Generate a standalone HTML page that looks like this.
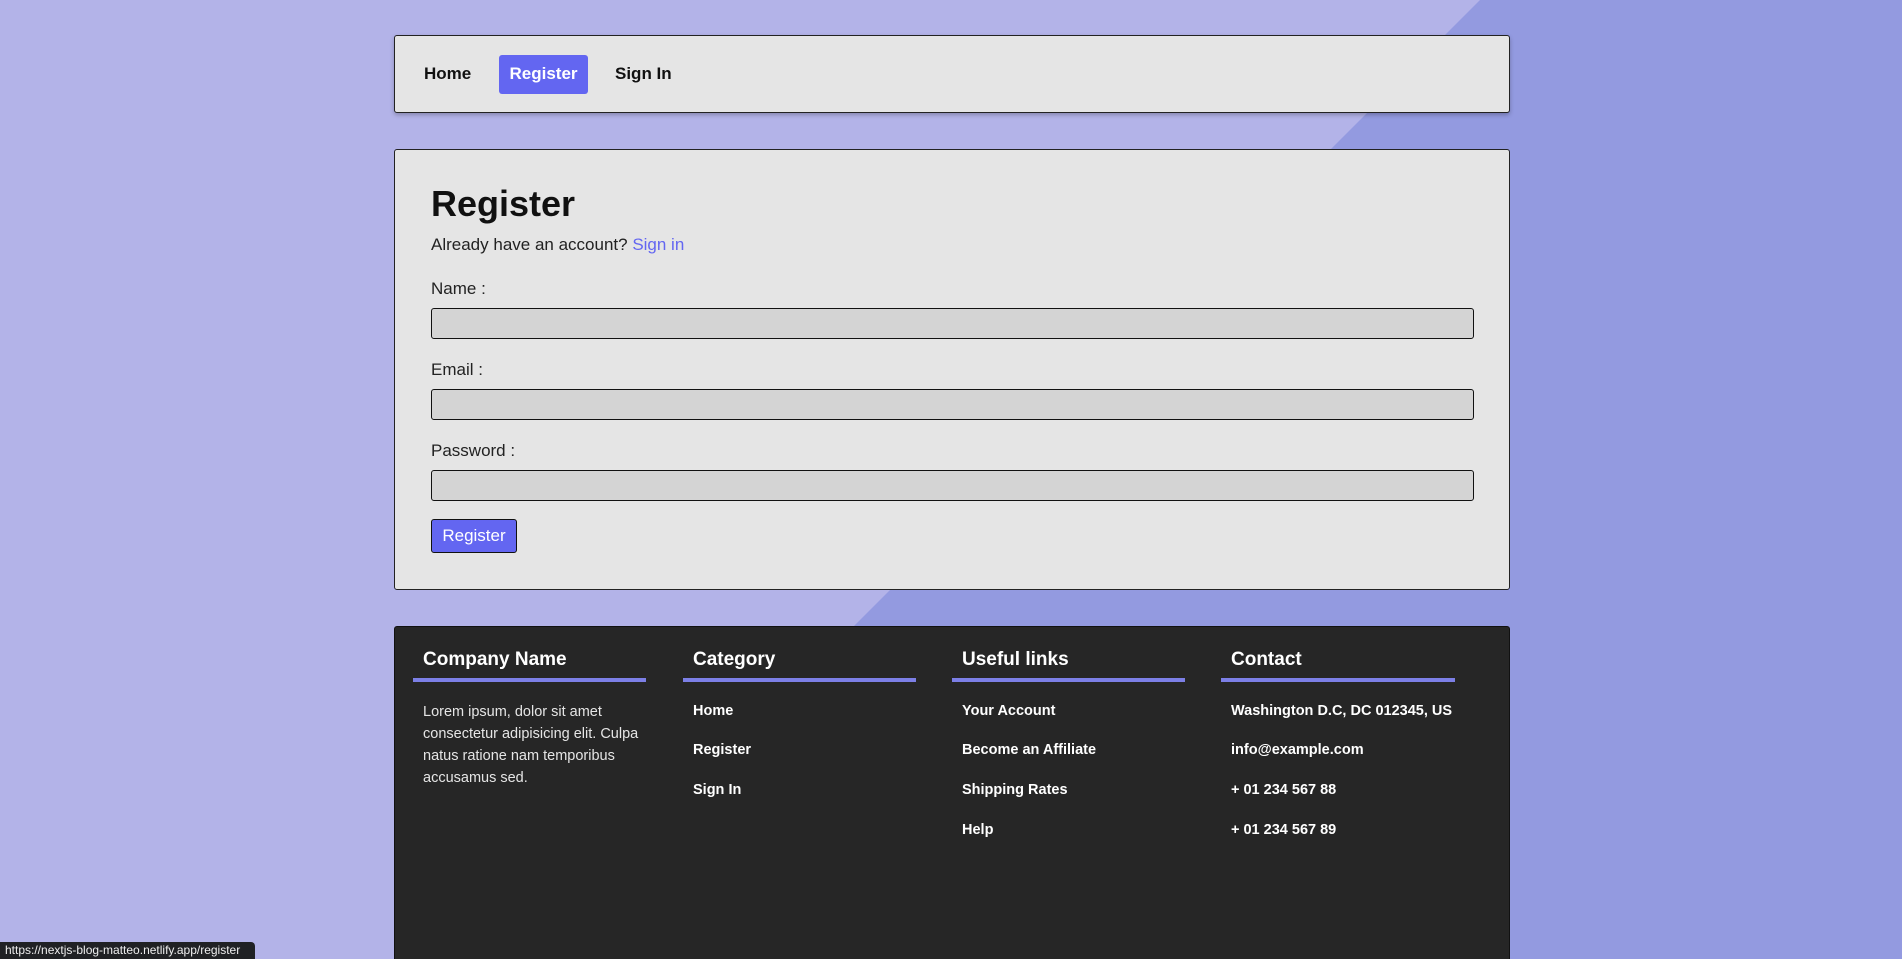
<!DOCTYPE html>
<html><head><style>
*{margin:0;padding:0;box-sizing:border-box}
html{background:#b3b3e8;width:1902px;height:959px;overflow:hidden}
body{width:1902px;height:959px;overflow:hidden;background:#b3b3e8;font-family:"Liberation Sans",Arial,sans-serif;position:relative}
.bg2{position:absolute;left:0;top:0;width:1902px;height:959px}
.box{position:absolute;left:394px;width:1116px;background:#e5e5e5;border:1px solid #222;border-radius:3px}
.nav{top:35px;height:78px;box-shadow:0 2px 4px rgba(0,0,0,.25)}
.nav a{position:absolute;top:19px;height:39px;line-height:37px;font-weight:bold;font-size:17px;color:#111;text-decoration:none}
.main{top:149px;height:441px}
.abs{position:absolute}
.lbl{position:absolute;left:36px;font-size:17px;color:#222}
.inp{position:absolute;left:36px;width:1043px;height:31px;background:#d4d4d4;border:1px solid #111;border-radius:3px}
.foot{position:absolute;left:394px;top:626px;width:1116px;height:333px;background:#262626;border:1px solid #111;border-bottom:none;border-radius:3px 3px 0 0;color:#fff}
.fh{position:absolute;top:22px;font-weight:bold;font-size:19px}
.ul{position:absolute;top:51px;height:4px;background:#7c7fe6}
.fl{position:absolute;font-weight:bold;font-size:14.5px}
</style></head><body>
<svg class="bg2" width="1902" height="959"><polygon points="1480,0 1902,0 1902,959 521,959" fill="#939ae0"/></svg>
<div class="box nav">
<a style="left:29px">Home</a>
<a style="left:104px;width:89px;background:#6366f1;color:#fff;border-radius:3px;text-align:center">Register</a>
<a style="left:220px">Sign In</a>
</div>
<div class="box main">
<div class="abs" style="left:36px;top:33px;font-size:36px;font-weight:bold;color:#111">Register</div>
<div class="lbl" style="top:85px">Already have an account? <span style="color:#6366f1">Sign in</span></div>
<div class="lbl" style="top:129px">Name :</div>
<div class="inp" style="top:158px"></div>
<div class="lbl" style="top:210px">Email :</div>
<div class="inp" style="top:239px"></div>
<div class="lbl" style="top:291px">Password :</div>
<div class="inp" style="top:320px"></div>
<div class="abs" style="left:36px;top:369px;width:86px;height:34px;background:#6366f1;border:1px solid #111;border-radius:3px;color:#fff;font-size:17px;text-align:center;line-height:32px">Register</div>
</div>
<div class="foot">
<div class="fh" style="left:28px">Company Name</div>
<div class="fh" style="left:298px">Category</div>
<div class="fh" style="left:567px">Useful links</div>
<div class="fh" style="left:836px">Contact</div>
<div class="ul" style="left:18px;width:233px"></div>
<div class="ul" style="left:288px;width:233px"></div>
<div class="ul" style="left:557px;width:233px"></div>
<div class="ul" style="left:826px;width:234px"></div>
<div class="abs" style="left:28px;top:74px;width:235px;font-size:14.5px;line-height:22px;color:#e5e5e5">Lorem ipsum, dolor sit amet consectetur adipisicing elit. Culpa natus ratione nam temporibus accusamus sed.</div>
<div class="fl" style="left:298px;top:76px">Home</div>
<div class="fl" style="left:298px;top:115px">Register</div>
<div class="fl" style="left:298px;top:155px">Sign In</div>
<div class="fl" style="left:567px;top:76px">Your Account</div>
<div class="fl" style="left:567px;top:115px">Become an Affiliate</div>
<div class="fl" style="left:567px;top:155px">Shipping Rates</div>
<div class="fl" style="left:567px;top:195px">Help</div>
<div class="fl" style="left:836px;top:76px">Washington D.C, DC 012345, US</div>
<div class="fl" style="left:836px;top:115px">info@example.com</div>
<div class="fl" style="left:836px;top:155px">+ 01 234 567 88</div>
<div class="fl" style="left:836px;top:195px">+ 01 234 567 89</div>
</div>
<div class="abs" style="left:0;top:942px;width:255px;height:17px;background:#202124;color:#eee;font-size:12px;line-height:17px;padding-left:5px;border-top-right-radius:4px">https://nextjs-blog-matteo.netlify.app/register</div>
</body></html>
